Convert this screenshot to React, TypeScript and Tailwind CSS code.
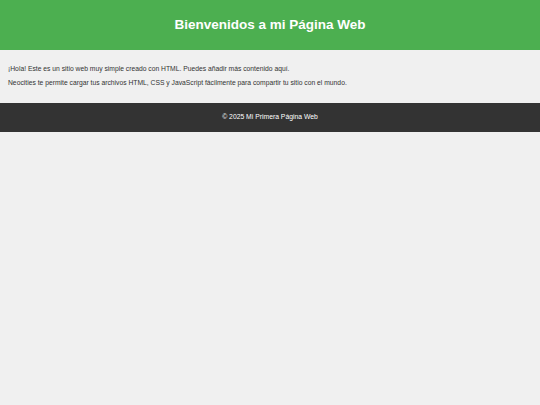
export default function App() {
  return (
    <div className="min-h-[405px] bg-[#f0f0f0] font-['Liberation_Sans',Arial,sans-serif] text-[#333]">
      <header className="flex h-[50px] items-center justify-center bg-[#4caf50]">
        <h1 className="text-[13.5px] font-bold leading-none text-white">Bienvenidos a mi Página Web</h1>
      </header>
      <main className="flex flex-col gap-[6px] px-[8px] pb-[16px] pt-[15px] text-[6.75px] leading-[8px]">
        <p>¡Hola! Este es un sitio web muy simple creado con HTML. Puedes añadir más contenido aquí.</p>
        <p>Neocities te permite cargar tus archivos HTML, CSS y JavaScript fácilmente para compartir tu sitio con el mundo.</p>
      </main>
      <footer className="flex h-[29px] items-center justify-center bg-[#333] text-[6.8px] text-white">
        <p>© 2025 Mi Primera Página Web</p>
      </footer>
    </div>
  );
}
